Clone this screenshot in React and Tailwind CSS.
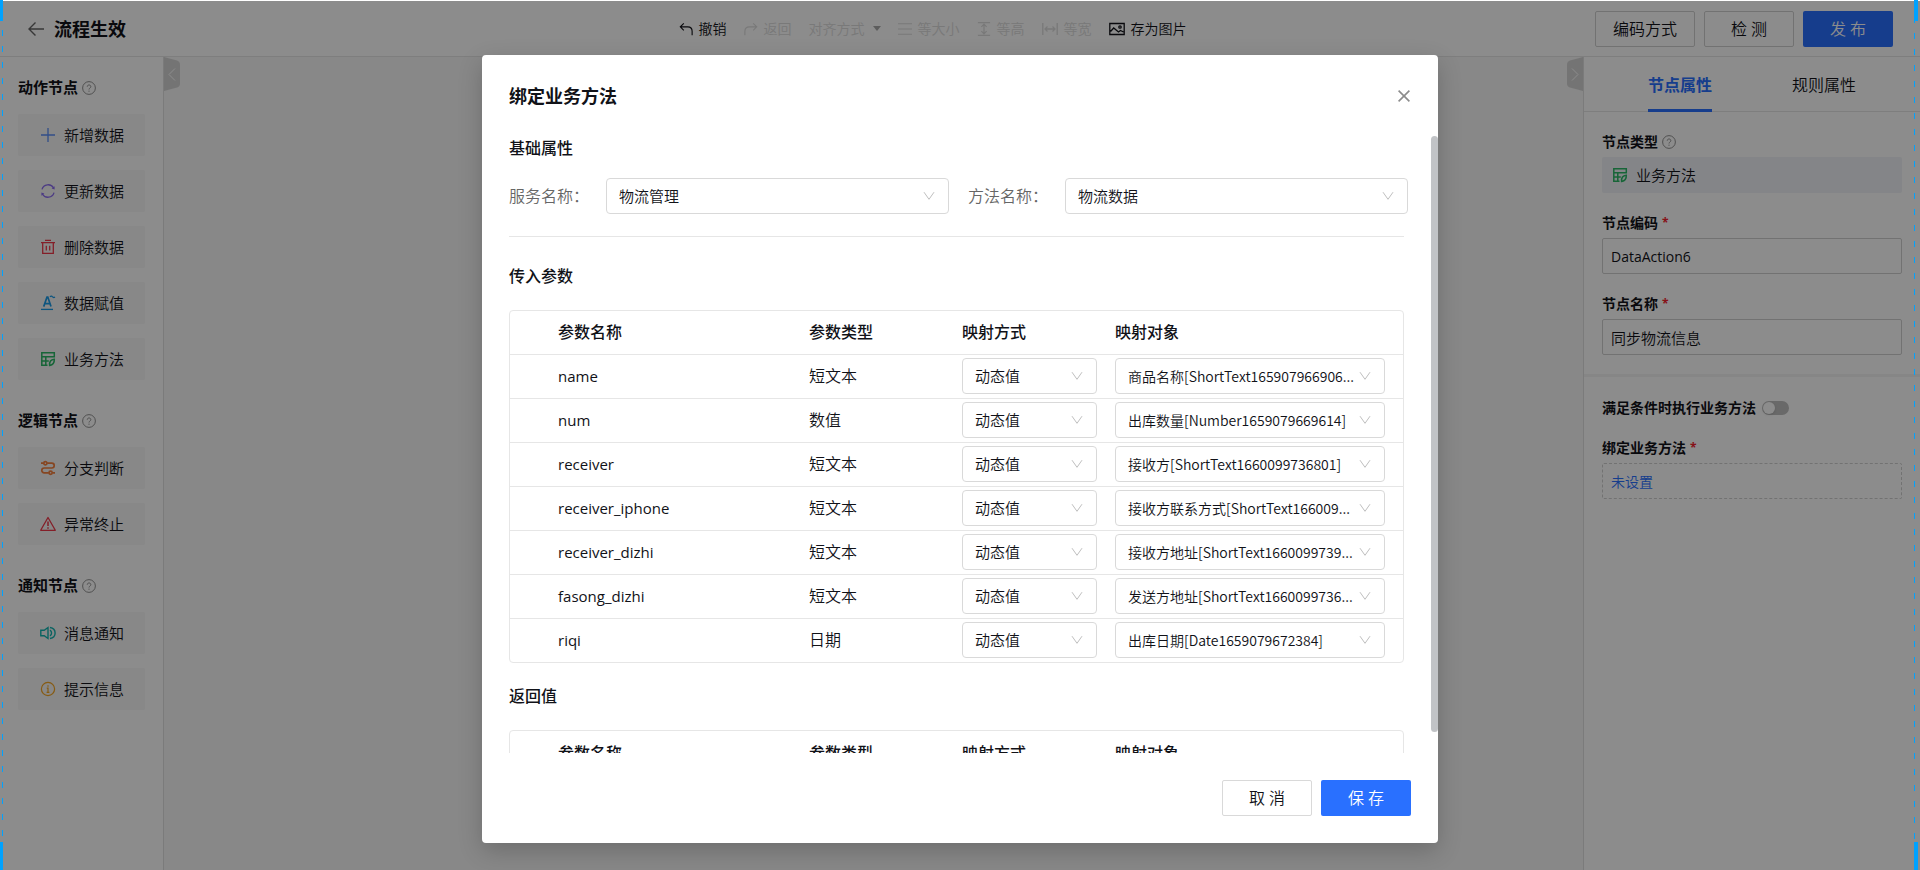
import { useState } from 'react';

const nodeGroups = [
  {
    title: '动作节点',
    nodes: [
      { label: '新增数据', icon: PlusIcon, color: 'text-[#5b8ff9]' },
      { label: '更新数据', icon: SyncIcon, color: 'text-[#8b6cf0]' },
      { label: '删除数据', icon: TrashIcon, color: 'text-[#f0384a]' },
      { label: '数据赋值', icon: AssignIcon, color: 'text-[#1a9be8]' },
      { label: '业务方法', icon: MethodIcon, color: 'text-[#2bb866]' },
    ],
  },
  {
    title: '逻辑节点',
    nodes: [
      { label: '分支判断', icon: BranchIcon, color: 'text-[#f5803e]' },
      { label: '异常终止', icon: WarningIcon, color: 'text-[#f0384a]' },
    ],
  },
  {
    title: '通知节点',
    nodes: [
      { label: '消息通知', icon: SoundIcon, color: 'text-[#13b5b1]' },
      { label: '提示信息', icon: InfoIcon, color: 'text-[#f5a623]' },
    ],
  },
];

const params = [
  { name: 'name', type: '短文本', target: '商品名称[ShortText165907966906...' },
  { name: 'num', type: '数值', target: '出库数量[Number1659079669614]' },
  { name: 'receiver', type: '短文本', target: '接收方[ShortText1660099736801]' },
  { name: 'receiver_iphone', type: '短文本', target: '接收方联系方式[ShortText166009...' },
  { name: 'receiver_dizhi', type: '短文本', target: '接收方地址[ShortText1660099739...' },
  { name: 'fasong_dizhi', type: '短文本', target: '发送方地址[ShortText1660099736...' },
  { name: 'riqi', type: '日期', target: '出库日期[Date1659079672384]' },
];

function Svg({ size = 16, children, className = '', box = 16, stroke = 1.3 }) {
  return (
    <svg
      width={size}
      height={size}
      viewBox={`0 0 ${box} ${box}`}
      fill="none"
      stroke="currentColor"
      strokeWidth={stroke}
      className={`shrink-0 ${className}`}
      aria-hidden="true"
    >
      {children}
    </svg>
  );
}

function PlusIcon() {
  return <Svg><path d="M8 1v14M1 8h14" /></Svg>;
}

function SyncIcon() {
  return (
    <Svg>
      <path d="M2 6.4A6.3 6.3 0 0 1 13.6 5M14 9.6A6.3 6.3 0 0 1 2.4 11" />
      <path d="M14.6 3.2v3.3l-3-1zM1.4 12.8V9.5l3 1z" fill="currentColor" stroke="none" />
    </Svg>
  );
}

function TrashIcon() {
  return <Svg><path d="M1 3.7h14M5 1.4h6M2.7 3.7v10.6h10.6V3.7M6.3 6.8v4.6M9.7 6.8v4.6" /></Svg>;
}

function AssignIcon() {
  return (
    <Svg>
      <path d="M1 14.4h12" />
      <path d="M3.7 11.6 7 2h.8l3.2 9.6M4.9 8.6h5" strokeWidth="1.7" />
      <path d="M10 1.9c1-1.2 1.9-.6 2.5 0s1.5.8 2.5.1" />
    </Svg>
  );
}

function MethodIcon() {
  return (
    <Svg stroke={1.5}>
      <path d="M7.5 14.3H1.8V1.8h12.5v4H1.8M5.8 5.8v8.4M1.8 9.9h7" />
      <path d="M9.6 14.4c-.3-3 1-5.7 4.7-6.1.2 3.5-1.2 5.6-4.7 6.1z" />
    </Svg>
  );
}

function BranchIcon() {
  return (
    <Svg stroke={1.7}>
      <path d="M1 3.2h2.6M7.2 3.2h4.6a2.4 2.4 0 0 1 0 4.8H4.2a2.4 2.4 0 0 0 0 4.8h4.6M12.4 12.8H15" />
      <circle cx="5.4" cy="3.2" r="1.6" />
      <circle cx="10.6" cy="12.8" r="1.6" />
    </Svg>
  );
}

function WarningIcon() {
  return (
    <Svg>
      <path d="M8 1.5 15.3 14.3H.7z" strokeLinejoin="round" />
      <path d="M8 5.5v4.5M8 11.2v1.5" strokeWidth="1.5" />
    </Svg>
  );
}

function SoundIcon() {
  return (
    <Svg stroke={1.4}>
      <path d="M.8 5.2h3.4L8 2.5v11l-3.8-2.7H.8z" />
      <path d="M10 5.2a3.3 3.3 0 0 1 0 5.6M10 2.5c6.8.8 6.8 10.2 0 11" />
    </Svg>
  );
}

function InfoIcon() {
  return (
    <Svg stroke={1.2}>
      <circle cx="8" cy="8" r="6.6" />
      <path d="M8 4.2v1.5M6.8 7.2H8v4M6.6 11.3h2.8" />
    </Svg>
  );
}

function HelpIcon() {
  return (
    <Svg size={14} stroke={1.1} className="text-[#8c8c8c]">
      <circle cx="8" cy="8" r="7.3" />
      <path d="M6 6.5c0-2.6 4.1-2.6 4.1 0 0 1.5-2.1 1.6-2.1 3.2M8 11v1.3" />
    </Svg>
  );
}

function ChevronDown({ className }) {
  return (
    <Svg size={12} box={12} stroke={1} className={className}>
      <path d="M1 2.2 6 9.3l5-7.1" />
    </Svg>
  );
}

function SelectBox({ id, label, value, textClass = 'text-[15px]' }) {
  return (
    <div className="relative w-full">
      <select
        id={id}
        aria-label={label}
        defaultValue={value}
        className={`block h-9 w-full appearance-none rounded border border-[#d9d9d9] bg-white pl-3 pr-2 leading-5 outline-none focus:border-[#2970ff] ${textClass}`}
      >
        <option value={value}>{value}</option>
      </select>
      <ChevronDown className="pointer-events-none absolute right-3.5 top-3 text-[#bfbfbf]" />
    </div>
  );
}

function ToolButton({ children, disabled }) {
  return (
    <button
      type="button"
      disabled={disabled}
      className="flex items-center gap-1.5 whitespace-nowrap disabled:text-[#dcdcdc]"
    >
      {children}
    </button>
  );
}

function Header() {
  return (
    <header className="flex h-14 shrink-0 items-center border-b border-[#e6e6e6] bg-white">
      <div className="flex flex-1 items-center gap-2.5 pl-7">
        <button type="button" aria-label="返回上一页" className="text-[#666]">
          <Svg stroke={1.4}>
            <path d="M16 8H1M7.5 1.5 1 8l6.5 6.5" />
          </Svg>
        </button>
        <h1 className="text-lg font-bold">流程生效</h1>
      </div>

      <div className="mr-14 flex items-center gap-[17px] text-[14px]">
        <ToolButton>
          <Svg size={14}><path d="M5.5 1.5l-4 4 4 4M1.5 5.5H10c3 0 5 2 5 5V15" /></Svg>
          撤销
        </ToolButton>
        <ToolButton disabled>
          <Svg size={14}><path d="M10.5 1.5l4 4-4 4M14.5 5.5H6c-3 0-5 2-5 5V15" /></Svg>
          返回
        </ToolButton>
        <ToolButton disabled>
          对齐方式
          <span className="ml-0.5 border-x-4 border-t-5 border-x-transparent border-t-[#aaa]" />
        </ToolButton>
        <ToolButton disabled>
          <Svg size={14}><path d="M0 2h16M0 8h16M0 14h16" /></Svg>
          等大小
        </ToolButton>
        <ToolButton disabled>
          <Svg size={14} stroke={1.4}>
            <path d="M1 .8h14M1 15.2h14M8 3v10M5 5.5l3-3 3 3M5 10.5l3 3 3-3" />
          </Svg>
          等高
        </ToolButton>
        <ToolButton disabled>
          <Svg>
            <path d="M.8 2v12M15.2 2v12M3 8h10M5.5 5.5L3 8l2.5 2.5M10.5 5.5L13 8l-2.5 2.5" />
          </Svg>
          等宽
        </ToolButton>
        <ToolButton>
          <Svg>
            <path d="M.8 2.5h14.4v11H.8zM1.5 10.5L4.7 7l4.8 4 2-1.5 3 1.5" />
            <circle cx="11" cy="6" r="1.2" />
          </Svg>
          存为图片
        </ToolButton>
      </div>

      <div className="flex flex-1 justify-end gap-[9px] pr-[27px] text-base">
        <button type="button" className="h-9 rounded-xs border border-[#d0d0d0] px-[17px]">
          编码方式
        </button>
        <button type="button" className="h-9 w-[90px] rounded-xs border border-[#d0d0d0]">
          检 测
        </button>
        <button type="button" className="h-9 w-[90px] rounded-xs bg-[#2970ff] text-white">
          发 布
        </button>
      </div>
    </header>
  );
}

function NodePanel() {
  return (
    <aside className="flex w-41 shrink-0 flex-col gap-[30px] border-r border-[#e0e0e0] bg-white px-[18px] pt-5">
      {nodeGroups.map((group) => (
        <section key={group.title}>
          <h2 className="mb-4 flex h-[21px] items-center gap-1 text-[15px] font-bold">
            {group.title}
            <HelpIcon />
          </h2>
          <div className="flex flex-col gap-3.5">
            {group.nodes.map(({ label, icon: Icon, color }) => (
              <button
                key={label}
                type="button"
                className="flex h-[42px] items-center gap-2 rounded-xs bg-[#f7f7f7] pl-[22px] text-[15px]"
              >
                <span className={color}><Icon /></span>
                {label}
              </button>
            ))}
          </div>
        </section>
      ))}
    </aside>
  );
}

function Canvas() {
  return (
    <main className="relative flex-1 bg-[#f7f7f7]">
      <button type="button" aria-label="收起左侧面板" className="absolute left-0 top-0 text-[#d4d4d4]">
        <svg width="16" height="34" viewBox="0 0 16 34" fill="currentColor">
          <path d="M0 0 13 3.5q3 1 3 4v19q0 3-3 4L0 34z" />
          <path d="m11 11.5-6 6 6 6" fill="none" stroke="#fff" />
        </svg>
      </button>
      <button type="button" aria-label="收起右侧面板" className="absolute right-0 top-0 text-[#d4d4d4]">
        <svg width="16" height="34" viewBox="0 0 16 34" fill="currentColor">
          <path d="M16 0 3 3.5q-3 1-3 4v19q0 3 3 4L16 34z" />
          <path d="m5 11.5 6 6-6 6" fill="none" stroke="#fff" />
        </svg>
      </button>
    </main>
  );
}

function FieldLabel({ htmlFor, children, required }) {
  return (
    <label htmlFor={htmlFor} className="mb-1.5 flex h-[19px] items-center gap-1 text-[14px] font-bold">
      {children}
      {required && <span className="text-xs text-[#f5222d]">*</span>}
    </label>
  );
}

function PropertyPanel() {
  const [tab, setTab] = useState('节点属性');

  return (
    <aside className="w-[337px] shrink-0 border-l border-[#e0e0e0] bg-white">
      <div role="tablist" className="flex h-[55px] justify-center gap-20 border-b border-[#e6e6e6] text-base">
        {['节点属性', '规则属性'].map((name) => (
          <button
            key={name}
            type="button"
            role="tab"
            aria-selected={tab === name}
            onClick={() => setTab(name)}
            className="-mb-px border-b-3 border-transparent pt-1 aria-selected:border-[#2970ff] aria-selected:font-bold aria-selected:text-[#2970ff]"
          >
            {name}
          </button>
        ))}
      </div>

      <div className="flex flex-col gap-5 border-b-3 border-[#f4f4f4] px-[18px] pb-[19px] pt-5">
        <div>
          <FieldLabel>
            节点类型
            <HelpIcon />
          </FieldLabel>
          <div className="flex h-9 items-center gap-2 rounded-xs bg-[#f0f3f7] pl-2.5 text-[15px]">
            <span className="text-[#2bb866]"><MethodIcon /></span>
            业务方法
          </div>
        </div>
        <div>
          <FieldLabel htmlFor="node-code" required>节点编码</FieldLabel>
          <input
            id="node-code"
            defaultValue="DataAction6"
            className="h-9 w-full rounded-xs border border-[#d0d0d0] px-2 text-[14px] font-normal"
          />
        </div>
        <div>
          <FieldLabel htmlFor="node-name" required>节点名称</FieldLabel>
          <input
            id="node-name"
            defaultValue="同步物流信息"
            className="h-9 w-full rounded-xs border border-[#d0d0d0] px-2 text-[15px]"
          />
        </div>
      </div>

      <div className="flex flex-col gap-5 px-[18px] pt-5">
        <div className="flex h-[21px] items-center gap-1.5">
          <label htmlFor="run-on-match" className="text-[14px] font-bold">
            满足条件时执行业务方法
          </label>
          <input
            id="run-on-match"
            type="checkbox"
            role="switch"
            className="relative h-3.5 w-[27px] appearance-none rounded-full bg-[#bfbfbf] before:absolute before:left-px before:top-px before:size-3 before:rounded-full before:bg-white before:shadow checked:bg-[#2970ff] checked:before:left-3.5"
          />
        </div>
        <div>
          <FieldLabel htmlFor="bind-method" required>绑定业务方法</FieldLabel>
          <button
            id="bind-method"
            type="button"
            className="h-9 w-full rounded-xs border border-dashed border-[#d0d0d0] px-2 text-left text-[14px] text-[#2970ff]"
          >
            未设置
          </button>
        </div>
      </div>
    </aside>
  );
}

function ParamTable({ rows }) {
  return (
    <div className="mr-1 rounded border border-[#e6e6e6]">
      <table className="w-full table-fixed border-collapse text-left text-base">
        <colgroup>
          <col className="w-[299px]" />
          <col className="w-[153px]" />
          <col className="w-[153px]" />
          <col />
        </colgroup>
        <thead>
          <tr className="h-[43px]">
            <th className="pl-12 font-medium">参数名称</th>
            <th className="font-medium">参数类型</th>
            <th className="font-medium">映射方式</th>
            <th className="font-medium">映射对象</th>
          </tr>
        </thead>
        <tbody>
          {rows.map((row) => (
            <tr key={row.name} className="h-11 border-t border-[#e6e6e6]">
              <td className="pl-12 text-[15px] font-normal">{row.name}</td>
              <td>{row.type}</td>
              <td className="pr-[18px]">
                <SelectBox label={`${row.name} 映射方式`} value="动态值" />
              </td>
              <td className="pr-[18px]">
                <SelectBox
                  label={`${row.name} 映射对象`}
                  value={row.target}
                  textClass="text-[14px] font-['Noto_Sans_CJK_SC',sans-serif]"
                />
              </td>
            </tr>
          ))}
        </tbody>
      </table>
    </div>
  );
}

function BindMethodDialog() {
  return (
    <div
      role="dialog"
      aria-modal="true"
      aria-labelledby="dialog-title"
      className="flex w-[956px] flex-col rounded bg-white shadow-[0_8px_24px_rgba(0,0,0,0.2)]"
    >
      <div className="flex h-[81px] shrink-0 items-center justify-between pl-[27px] pr-7">
        <h2 id="dialog-title" className="text-lg font-bold">绑定业务方法</h2>
        <button type="button" aria-label="关闭" className="text-[#8c8c8c]">
          <Svg size={12} box={12} stroke={1.6}>
            <path d="m.6.6 10.8 10.8M11.4.6.6 11.4" />
          </Svg>
        </button>
      </div>

      <div className="relative min-h-0 flex-1 overflow-hidden pl-[27px] pr-[30px]">
        <h3 className="text-base leading-6 font-medium">基础属性</h3>
        <div className="mt-[18px] flex items-center gap-[19px]">
          <div className="flex flex-1 items-center">
            <label htmlFor="service" className="w-[97px] shrink-0 text-base text-[#666]">服务名称：</label>
            <SelectBox id="service" value="物流管理" />
          </div>
          <div className="flex flex-1 items-center">
            <label htmlFor="method" className="w-[97px] shrink-0 text-base text-[#666]">方法名称：</label>
            <SelectBox id="method" value="物流数据" />
          </div>
        </div>
        <hr className="mr-1 mt-[22px] border-[#e6e6e6]" />

        <h3 className="mb-[22px] mt-[27px] text-base leading-6 font-medium">传入参数</h3>
        <ParamTable rows={params} />

        <h3 className="mb-[22px] mt-[21px] text-base leading-6 font-medium">返回值</h3>
        <ParamTable rows={[]} />

        <div className="absolute right-0 top-0 h-[596px] w-[7px] rounded-full bg-[#c1c3c6]" />
      </div>

      <div className="flex shrink-0 justify-end gap-[9px] p-[27px] text-base">
        <button type="button" className="h-9 w-[90px] rounded-xs border border-[#d9d9d9]">取 消</button>
        <button type="button" className="h-9 w-[90px] rounded-xs bg-[#2970ff] text-white">保 存</button>
      </div>
    </div>
  );
}

// Blue corner handles and dashed edges of the capture frame
function CaptureFrame() {
  return (
    <div className="pointer-events-none absolute inset-0">
      <div className="absolute left-0 top-0 h-[21px] w-[3px] bg-[#00a2ff]" />
      <div className="absolute bottom-0 left-0 h-7 w-[3px] bg-[#00a2ff]" />
      <div className="absolute bottom-7 left-0.5 top-[30px] w-px bg-[repeating-linear-gradient(to_bottom,#00a2ff_0_6px,transparent_6px_16px)]" />
      <div className="absolute right-0.5 top-0 h-[21px] w-1 bg-[#00a2ff]" />
      <div className="absolute bottom-0 right-0.5 h-7 w-1 bg-[#00a2ff]" />
      <div className="absolute bottom-7 right-[5px] top-[17px] w-px bg-[repeating-linear-gradient(to_bottom,#00a2ff_0_6px,transparent_6px_16px)]" />
    </div>
  );
}

export default function App() {
  return (
    <div className="relative flex h-screen flex-col overflow-hidden bg-white pt-px font-['Open_Sans','Noto_Sans_CJK_SC',sans-serif] font-[350] text-[#111218]">
      <Header />
      <div className="flex min-h-0 flex-1">
        <NodePanel />
        <Canvas />
        <PropertyPanel />
      </div>

      <div className="absolute inset-x-0 bottom-0 top-px flex justify-center bg-black/45 pb-[27px] pt-[54px]">
        <BindMethodDialog />
      </div>
      <CaptureFrame />
    </div>
  );
}
